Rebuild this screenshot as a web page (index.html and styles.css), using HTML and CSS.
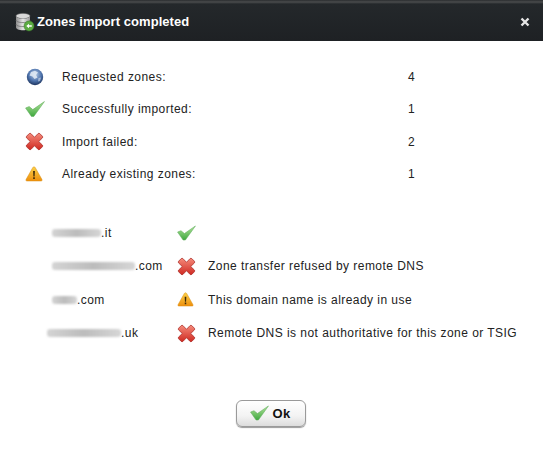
FILE: index.html
```html
<!DOCTYPE html>
<html lang="en">
<head>
  <meta charset="UTF-8">
  <title>Zones import completed</title>
  <link rel="stylesheet" href="styles.css">
</head>
<body>

  <!-- Shared icons -->
  <svg class="defs" width="0" height="0">
    <defs>
      <linearGradient id="gradCheck" x1="0" y1="0" x2="0" y2="1">
        <stop offset="0" stop-color="#b4e59c"/>
        <stop offset="1" stop-color="#3fa83f"/>
      </linearGradient>
      <linearGradient id="gradCross" x1="0" y1="0" x2="0" y2="1">
        <stop offset="0" stop-color="#f58a7a"/>
        <stop offset="1" stop-color="#cf2a22"/>
      </linearGradient>
      <linearGradient id="gradWarn" x1="0" y1="0" x2="0" y2="1">
        <stop offset="0" stop-color="#fbd24a"/>
        <stop offset="1" stop-color="#ee8f0c"/>
      </linearGradient>
      <radialGradient id="gradGlobe" cx="0.5" cy="0.35" r="0.7">
        <stop offset="0" stop-color="#b9cfe8"/>
        <stop offset="0.55" stop-color="#4f74ad"/>
        <stop offset="1" stop-color="#14284f"/>
      </radialGradient>
      <linearGradient id="gradDisk" x1="0" y1="0" x2="1" y2="0">
        <stop offset="0" stop-color="#8d8d8d"/>
        <stop offset="0.5" stop-color="#e6e6e6"/>
        <stop offset="1" stop-color="#9a9a9a"/>
      </linearGradient>
      <symbol id="i-check" viewBox="0 0 20 16">
        <path d="M.6 7 L4.2 5.6 L7.8 8.6 L19.4 .6 L8.8 15.4 L6.4 15.4 Z" fill="url(#gradCheck)" stroke="#62ad5e" stroke-width=".6" stroke-linejoin="round"/>
      </symbol>
      <symbol id="i-cross" viewBox="0 0 18 18">
        <path d="M1.5 4 L4 1.5 Q4.8 .9 5.6 1.5 L9 5 L12.4 1.5 Q13.2 .9 14 1.5 L16.5 4 Q17.1 4.8 16.5 5.6 L13 9 L16.5 12.4 Q17.1 13.2 16.5 14 L14 16.5 Q13.2 17.1 12.4 16.5 L9 13 L5.6 16.5 Q4.8 17.1 4 16.5 L1.5 14 Q.9 13.2 1.5 12.4 L5 9 L1.5 5.6 Q.9 4.8 1.5 4 Z" fill="url(#gradCross)" stroke="#a82a26" stroke-width=".7"/>
      </symbol>
      <symbol id="i-warn" viewBox="0 0 18 16">
        <path d="M9 .8 Q9.8 .8 10.3 1.7 L17 13.6 Q17.6 15 16 15 L2 15 Q.4 15 1 13.6 L7.7 1.7 Q8.2 .8 9 .8 Z" fill="url(#gradWarn)" stroke="#d98c12" stroke-width=".5"/>
        <path d="M8.1 5 L9.9 5 L9.6 10.4 L8.4 10.4 Z M8.2 11.3 H9.8 V13 H8.2 Z" fill="#3d2a08"/>
      </symbol>
    </defs>
  </svg>

  <div class="dialog">
    <div class="titlebar">
      <svg class="title-icon" viewBox="0 0 20 20" width="20" height="20">
        <ellipse cx="8" cy="4" rx="7" ry="2.6" fill="#d8d8d8" stroke="#777" stroke-width=".5"/>
        <path d="M1 4 V15.5 C1 17 4 18.2 8 18.2 C12 18.2 15 17 15 15.5 V4 C15 5.5 12 6.6 8 6.6 C4 6.6 1 5.5 1 4 Z" fill="url(#gradDisk)"/>
        <path d="M1 8 C1 9.5 4 10.6 8 10.6 C12 10.6 15 9.5 15 8 M1 12 C1 13.5 4 14.6 8 14.6 C12 14.6 15 13.5 15 12" fill="none" stroke="#666" stroke-width=".7"/>
        <circle cx="14" cy="14" r="5" fill="#5cab43" stroke="#3b7d2a" stroke-width=".5"/>
        <path d="M11.3 14 L14 11.8 V13.2 H16.8 V14.8 H14 V16.2 Z" fill="#fff"/>
      </svg>
      <span class="title-text">Zones import completed</span>
      <svg class="close" viewBox="0 0 10 10" width="10" height="10">
        <path d="M1.5 1.5 L8.5 8.5 M8.5 1.5 L1.5 8.5" stroke="#e6e6e6" stroke-width="2.4"/>
      </svg>
    </div>

    <div class="summary">
      <svg class="icon globe" viewBox="0 0 18 18" width="18" height="18">
        <circle cx="9" cy="9" r="8.2" fill="url(#gradGlobe)"/>
        <path d="M5 4 L9 2.8 L12 4.5 L10 7 L11.5 9.5 L8.5 11 L6.5 8.5 L3.5 7.5 Z" fill="#e3ebf4" opacity=".85"/>
        <path d="M12.5 10 L15 9.5 L14 13 L12 13.5 Z" fill="#dbe5f0" opacity=".6"/>
      </svg>
      <span>Requested zones:</span><span>4</span>

      <svg class="icon" width="20" height="16"><use href="#i-check"/></svg>
      <span>Successfully imported:</span><span>1</span>

      <svg class="icon" width="19" height="19"><use href="#i-cross"/></svg>
      <span>Import failed:</span><span>2</span>

      <svg class="icon" width="18" height="16"><use href="#i-warn"/></svg>
      <span>Already existing zones:</span><span>1</span>
    </div>

    <div class="details">
      <span class="domain d1"><i class="smudge"></i>.it</span>
      <svg class="icon" width="19" height="16"><use href="#i-check"/></svg>
      <span></span>

      <span class="domain d2"><i class="smudge"></i>.com</span>
      <svg class="icon" width="19" height="19"><use href="#i-cross"/></svg>
      <span>Zone transfer refused by remote DNS</span>

      <span class="domain d3"><i class="smudge"></i>.com</span>
      <svg class="icon" width="17" height="15"><use href="#i-warn"/></svg>
      <span>This domain name is already in use</span>

      <span class="domain d4"><i class="smudge"></i>.uk</span>
      <svg class="icon" width="19" height="19"><use href="#i-cross"/></svg>
      <span>Remote DNS is not authoritative for this zone or TSIG</span>
    </div>

    <div class="actions">
      <button class="btn-ok">
        <svg width="19" height="16"><use href="#i-check"/></svg>
        <span>Ok</span>
      </button>
    </div>
  </div>

</body>
</html>
```

FILE: styles.css
```css
* {
  margin: 0;
  padding: 0;
  box-sizing: border-box;
}
body {
  font-family: 'Liberation Sans', Arial, sans-serif;
  font-size: 12px;
  letter-spacing: 0.45px;
  color: #222;
  background: #fff;
  overflow: hidden;
}
.defs {
  position: absolute;
}
.dialog {
  width: 543px;
  height: 475px;
}
/* Title bar */
.titlebar {
  height: 41px;
  display: flex;
  align-items: center;
  padding: 2px 13px 0 15px;
  background: linear-gradient(#2a2d2f 0, #4a4c4d 2px, #24282b 4px, #1e2124 100%);
  color: #fff;
}
.title-icon {
  margin-right: 2px;
}
.title-text {
  flex: 1;
  font-size: 13px;
  font-weight: bold;
  letter-spacing: 0.06px;
}
/* Summary rows */
.summary {
  display: grid;
  grid-template-columns: 37px 346px auto;
  grid-auto-rows: 32.3px;
  align-items: center;
  padding: 20px 0 0 25px;
}
.summary .icon {
  justify-self: start;
}
.summary .globe {
  margin-left: 1px;
}
/* Per-zone rows */
.details {
  display: grid;
  grid-template-columns: 131px 31px 1fr;
  grid-auto-rows: 33.4px;
  align-items: center;
  padding: 26px 0 0 46px;
}
.details .icon {
  justify-self: start;
}
.domain {
  display: flex;
  align-items: center;
}
.smudge {
  display: block;
  height: 8px;
  background: linear-gradient(90deg, #d4d4d4, #bcbcbc 50%, #d6d6d6);
  border-radius: 3px;
  filter: blur(1.2px);
}
.d1 { padding-left: 6px; }
.d1 .smudge { width: 49px; }
.d2 { padding-left: 6px; }
.d2 .smudge { width: 83px; }
.d3 { padding-left: 6px; }
.d3 .smudge { width: 25px; }
.d4 { padding-left: 1px; }
.d4 .smudge { width: 74px; }
/* Button */
.actions {
  display: flex;
  justify-content: center;
  padding: 50px 2px 0 0;
}
.btn-ok {
  width: 70px;
  height: 27px;
  display: flex;
  align-items: center;
  justify-content: center;
  gap: 3px;
  font-family: inherit;
  font-size: 13px;
  font-weight: bold;
  letter-spacing: 0.4px;
  color: #111;
  background: linear-gradient(#ffffff, #f3f3f3 60%, #dcdcdc);
  border: 1px solid #9a9a9a;
  border-radius: 6px;
  box-shadow: 0 1px 1px #999;
}
```
